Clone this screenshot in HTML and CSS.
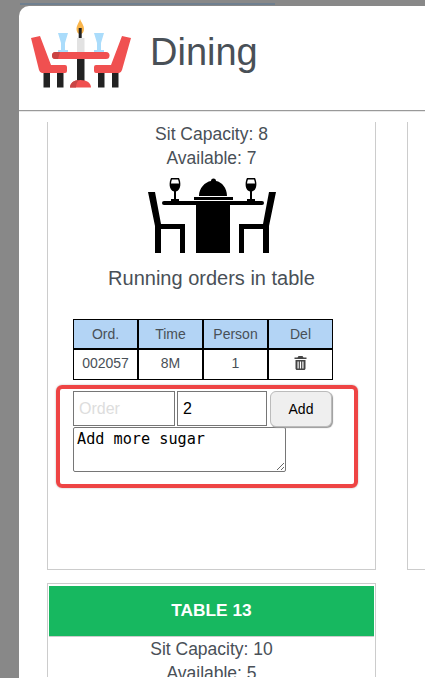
FILE: index.html
```html
<!DOCTYPE html>
<html>
  <head>
    <title>Dining</title>
    <meta charset="UTF-8" />
    <link rel="stylesheet" href="styles.css">
  </head>

  <body>
    <div class="backdrop_strip"></div>
    <div class="modal">
      <div class="modal_header">
        <svg class="logo" width="102" height="70" viewBox="30 19 102 70">
          <path d="M76.500 29C76.500 25 79 23 80 19C81.500 23 84 25 84 29C84 32 82.500 34 80.200 34C78 34 76.500 32 76.500 29Z" fill="#f9b54c"/>
          <rect x="78.700" y="28" width="3" height="10" fill="#222"/>
          <rect x="77" y="38" width="7.500" height="14" fill="#e2e2e2"/>
          <path d="M58 33H68L65 43V50H68V52H58V50H61V43Z" fill="#aadcfb"/>
          <path d="M94 33H104L101 43V50H104V52H94V50H97V43Z" fill="#aadcfb"/>
          <rect x="52" y="52" width="57.500" height="7" rx="3.500" fill="#f05050"/>
          <path d="M55.500 52H60L58 59H55.500A3.500 3.500 0 0 1 55.500 52Z" fill="#c94545"/>
          <rect x="77" y="59" width="7.500" height="22" fill="#222"/>
          <path d="M70 87.500C70 83 74 80 80.500 80C87 80 91 83 91 87.500Z" fill="#f05050"/>
          <path d="M70 87.500C70 83 74 80 79 80C77 82 76 84 76 87.500Z" fill="#c94545"/>
          <path d="M31 38L40 36L51 65H65Q67 65 67 67V71Q67 73 65 73H42Q40 73 39 70Z" fill="#f05050"/>
          <path d="M131 38L122 36L111 65H96Q94 65 94 67V71Q94 73 96 73H119Q121 73 122 70Z" fill="#f05050"/>
          <rect x="43.500" y="73" width="6.500" height="14.500" fill="#222"/>
          <rect x="57" y="73" width="6.500" height="14.500" fill="#222"/>
          <rect x="98" y="73" width="6.500" height="14.500" fill="#222"/>
          <rect x="112" y="73" width="6.500" height="14.500" fill="#222"/>
        </svg>
        <h1 class="modal_title">Dining</h1>
      </div>

      <div class="modal_body">
        <div class="table_grid">
          <div class="table_card first_card">
            <div class="info">Sit Capacity: 8</div>
            <div class="info">Available: 7</div>
            <svg class="table_icon" width="128" height="76" viewBox="148 177 128 76">
              <g fill="#000">
                <path d="M148 192H155L161 224H185V253H180V229H161V253H155V226Z"/>
                <path d="M276 192H269L263 224H239V253H244V229H263V253H269V226Z"/>
                <rect x="162" y="201" width="102" height="4" rx="2"/>
                <rect x="196" y="205" width="34" height="48"/>
                <rect x="194" y="197" width="39" height="3"/>
                <path d="M199 196C199 188 205 182 211 181A2.500 2.500 0 1 1 216 181C222 182 227 188 227 196Z"/>
                <path fill-rule="evenodd" d="M171 178H179C181 182 181.500 190 176 191.500V199H179V201H171V199H174V191.500C168.500 190 169 182 171 178ZM172 179.500C171.500 180.500 171.200 182 171 183.500H179C178.800 182 178.500 180.500 178 179.500Z"/>
                <path fill-rule="evenodd" d="M247 178H255C257 182 257.500 190 252 191.500V199H255V201H247V199H250V191.500C244.500 190 245 182 247 178ZM248 179.500C247.500 180.500 247.200 182 247 183.500H255C254.800 182 254.500 180.500 254 179.500Z"/>
              </g>
            </svg>
            <div class="running_title">Running orders in table</div>

            <table class="orders">
              <thead>
                <tr><th>Ord.</th><th>Time</th><th>Person</th><th>Del</th></tr>
              </thead>
              <tbody>
                <tr>
                  <td>002057</td>
                  <td>8M</td>
                  <td>1</td>
                  <td>
                    <svg class="trash" width="13" height="14" viewBox="0 0 12 14">
                      <path d="M4 0H8L9 1.500H12V3H0V1.500H3ZM1 4H11V12.500C11 13.300 10.300 14 9.500 14H2.500C1.700 14 1 13.300 1 12.500ZM3 5.500V12.500H4.200V5.500ZM5.400 5.500V12.500H6.600V5.500ZM7.800 5.500V12.500H9V5.500Z" fill="#444" fill-rule="evenodd"/>
                    </svg>
                  </td>
                </tr>
              </tbody>
            </table>

            <div class="order_form">
              <div class="form_row">
                <input class="order_input" type="text" placeholder="Order" />
                <input class="person_input" type="text" value="2" />
                <button class="add_btn">Add</button>
              </div>
              <textarea class="note_input">Add more sugar</textarea>
            </div>
          </div>

          <div class="table_card side_card"></div>

          <div class="table_card">
            <div class="card_head">TABLE 13</div>
            <div class="info">Sit Capacity: 10</div>
            <div class="info">Available: 5</div>
          </div>
        </div>
      </div>
    </div>
  </body>
</html>
```

FILE: styles.css
```css
html,
body {
  height: 100%;
}

body {
  margin: 0;
  background: #888;
  font-family: "Liberation Sans", sans-serif;
  color: #495057;
  overflow: hidden;
}

.backdrop_strip {
  height: 2px;
  margin: 3px 150px 0 20px;
  background: #6f7f8f;
}

.modal {
  margin: 1px 0 0 19px;
  height: 672px;
  background: #fff;
  border-top-left-radius: 10px;
  overflow: hidden;
}

.modal_header {
  height: 104px;
  display: flex;
  align-items: flex-start;
  gap: 18px;
  padding-left: 11px;
  border-bottom: 1px solid #999;
  box-shadow: 0 1px 0 #e8e8e8;
}

.logo {
  margin-top: 13px;
}

.modal_title {
  margin: 25px 0 0;
  font-size: 38px;
  font-weight: 400;
  line-height: 43px;
}

.modal_body {
  height: 555px;
  padding: 11px 0 0 28px;
  overflow: hidden;
}

.table_grid {
  display: grid;
  grid-template-columns: 329px 329px;
  grid-template-rows: 448px auto;
  column-gap: 31px;
  row-gap: 13px;
}

.table_card {
  border: 1px solid #ccc;
  text-align: center;
  padding: 0 1px;
}

.first_card,
.side_card {
  border-top: none;
}

.info {
  font-size: 17.5px;
  line-height: 24px;
}

.table_icon {
  display: block;
  margin: 7px auto 0;
}

.running_title {
  margin-top: 10px;
  font-size: 20px;
  line-height: 30px;
}

.orders {
  border-collapse: separate;
  border-spacing: 0;
  margin: 26px 0 0 24px;
  width: 260px;
  table-layout: fixed;
  font-size: 14px;
}

.orders th,
.orders td {
  border: 1px solid #000;
  font-weight: 400;
  padding: 0;
}

.orders th {
  background: #b3d4f5;
  height: 27px;
  padding-bottom: 1px;
}

.orders td {
  height: 26px;
  padding-bottom: 3px;
}

.trash {
  display: block;
  margin: 0 auto;
}

.order_form {
  width: 302px;
  height: 103px;
  margin: 5px 0 0 7px;
  padding: 2px 0 0 13px;
  border: 4px solid #ee4444;
  border-radius: 6px;
  box-sizing: border-box;
  text-align: left;
  box-shadow: 0 0 2px rgba(0, 0, 0, 0.3);
}

.form_row {
  display: flex;
  height: 36px;
  gap: 2px;
}

.order_input,
.person_input {
  box-sizing: border-box;
  height: 35px;
  border: 1px solid #767676;
  padding: 0 5px;
  font-family: "Liberation Sans", sans-serif;
  font-size: 16px;
  color: #000;
}

.order_input {
  width: 102px;
}

.person_input {
  width: 90px;
}

.order_input::placeholder {
  color: #ddd;
}

.add_btn {
  width: 62px;
  height: 36px;
  margin-left: 1px;
  border: 1px solid #bbb;
  border-radius: 6px;
  background: #efefef;
  font-family: "Liberation Sans", sans-serif;
  font-size: 14px;
  color: #000;
  box-shadow: 1px 1px 1px #999;
}

.note_input {
  display: block;
  box-sizing: border-box;
  width: 213px;
  height: 45px;
  margin: 0;
  padding: 2px 3px;
  border: 1px solid #767676;
  border-radius: 2px;
  font-family: "DejaVu Sans Mono", monospace;
  font-size: 15.2px;
  color: #000;
}

.card_head {
  height: 50px;
  margin-top: 2px;
  margin-bottom: 1px;
  background: #17b860;
  color: #fff;
  font-weight: 700;
  font-size: 17.3px;
  line-height: 49px;
  box-shadow: 0 1px 0 #ccc;
}
```
